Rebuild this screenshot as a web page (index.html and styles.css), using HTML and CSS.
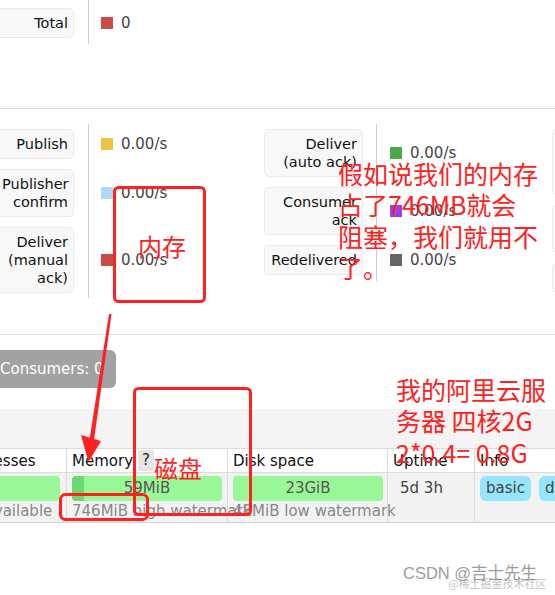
FILE: index.html
```html
<!DOCTYPE html>
<html>
<head>
<meta charset="utf-8">
<link rel="stylesheet" href="styles.css">
</head>
<body>
<div class="page">
  <div class="grp grp-total">
    <div class="lbl r1">Total</div>
    <div class="vline span1"></div>
    <div class="val r1"><span class="sq c-red"></span>0</div>
  </div>

  <hr class="rule rule-top">

  <div class="stats">
    <div class="grp g-left">
      <div class="lbl r1">Publish</div>
      <div class="val r1"><span class="sq c-yellow"></span>0.00/s</div>
      <div class="lbl r2">Publisher<br>confirm</div>
      <div class="val r2"><span class="sq c-blue"></span>0.00/s</div>
      <div class="lbl r3">Deliver<br>(manual<br>ack)</div>
      <div class="val r3"><span class="sq c-red"></span>0.00/s</div>
      <div class="vline span3"></div>
    </div>
    <div class="grp g-right">
      <div class="lbl r1">Deliver<br>(auto ack)</div>
      <div class="val r1"><span class="sq c-green"></span>0.00/s</div>
      <div class="lbl r2">Consumer<br>ack</div>
      <div class="val r2"><span class="sq c-purple"></span>0.00/s</div>
      <div class="lbl r3">Redelivered</div>
      <div class="val r3"><span class="sq c-grey"></span>0.00/s</div>
      <div class="vline span3"></div>
    </div>
    <div class="grp g-right">
      <div class="lbl r1">Get<br>(manual<br>ack)</div>
      <div class="val r1"><span class="sq c-yellow"></span>0.00/s</div>
      <div class="lbl r2">Get (auto<br>ack)</div>
      <div class="val r2"><span class="sq c-blue"></span>0.00/s</div>
      <div class="lbl r3">Get (empty)</div>
      <div class="val r3"><span class="sq c-red"></span>0.00/s</div>
      <div class="vline span3"></div>
    </div>
  </div>

  <hr class="rule rule-mid">

  <div class="consumers">Consumers: 0</div>

  <div class="band"></div>

  <div class="nodes">
    <div class="th k1">Erlang processes</div>
    <div class="th k2">Memory <span class="help">?</span></div>
    <div class="th k3">Disk space</div>
    <div class="th k4">Uptime</div>
    <div class="th k5">Info</div>

    <div class="row-bg"></div>
    <div class="td k1 first">
      <div class="bar"></div>
      <div class="sub sub-first">1048576 available</div>
    </div>
    <div class="td k2">
      <div class="bar"><span class="fill" style="width:12px"></span><span class="bar-txt">59MiB</span></div>
      <div class="sub">746MiB high watermark</div>
    </div>
    <div class="td k3">
      <div class="bar"><span class="bar-txt">23GiB</span></div>
      <div class="sub">48MiB low watermark</div>
    </div>
    <div class="td k4 uptime">5d 3h</div>
    <div class="td k5 info"><span class="tag">basic</span><span class="tag">disc</span><span class="tag">2</span></div>
  </div>

  <svg class="marks" width="555" height="595" viewBox="0 0 555 595">
    <rect x="114.5" y="187.5" width="90" height="114" rx="4" fill="none" stroke="#ff2020" stroke-width="3"/>
    <rect x="134.5" y="388.5" width="116" height="126" rx="4" fill="none" stroke="#ff2020" stroke-width="3"/>
    <rect x="60.5" y="494.5" width="87" height="25" rx="5" fill="none" stroke="#ff2020" stroke-width="3"/>
    <polygon points="109,314 111.5,314 94,440 89.5,440" fill="#ff2020"/>
    <polygon points="81,435 101,441 88.5,462" fill="#ff2020"/>
  </svg>

  <div class="note note-mem">内存</div>
  <div class="note note-disk">磁盘</div>
  <div class="note note-block note-a">假如说我们的内存<br>占了746MB就会<br>阻塞，我们就用不<br>了。</div>
  <div class="note note-block note-b">我的阿里云服<br>务器 四核2G<br>2*0.4= 0.8G</div>

  <div class="wm">CSDN @吉士先生</div>
  <div class="wm-sub">@稀土掘金技术社区</div>
</div>
</body>
</html>
```

FILE: styles.css
```css
* { box-sizing: border-box; }
html, body { margin: 0; padding: 0; background: #fff; }
body { font-family: "DejaVu Sans", "Noto Sans CJK SC", sans-serif; }

.page {
  position: relative;
  width: 555px;
  height: 595px;
  overflow: hidden;
  background: #fff;
}

/* ---------- stat groups ---------- */
.grp {
  display: grid;
  row-gap: 10px;
  flex: none;
}
.grp-total {
  margin-left: -5px;
  grid-template-columns: 79px 14px 1px 12px 163px;
  padding: 8px 0 6px;
}
.g-left {
  grid-template-columns: 79px 14px 1px 12px 163px;
  padding: 5px 0;
}
.g-right {
  grid-template-columns: 99px 13px 1px 13px 162px;
  padding: 5px 0 6px;
}
.stats {
  display: flex;
  align-items: flex-start;
  height: 174px;
  margin-left: -5px;
  margin-top: 15px;
}

.lbl {
  grid-column: 1;
  background: #f8f8f8;
  border: 1px solid #ebebeb;
  border-radius: 5px;
  padding: 5px 5px 5px 6px;
  text-align: right;
  font-size: 14.5px;
  line-height: 18px;
  color: #111;
  white-space: nowrap;
}
.val {
  grid-column: 5;
  display: flex;
  align-items: center;
  gap: 8px;
  font-size: 15px;
  color: #444;
}
.r1 { grid-row: 1; }
.r2 { grid-row: 2; }
.r3 { grid-row: 3; }

.vline {
  grid-column: 3;
  background: #cfcfcf;
  width: 1px;
}
.span1 { grid-row: 1 / span 1; margin: -8px 0 -6px; }
.span3 { grid-row: 1 / span 3; margin: -5px 0; }
.g-right .span3 { margin: -5px 0 -6px; }

.sq { width: 12px; height: 12px; flex: none; }
.c-red { background: #cb4b4b; }
.c-yellow { background: #edc240; }
.c-blue { background: #afd8f8; }
.c-green { background: #4da74d; }
.c-purple { background: #9440ed; }
.c-grey { background: #666; }

.rule {
  border: 0;
  height: 1px;
  background: #e0e0e0;
  margin: 0;
}
.rule-top { margin-top: 64px; }
.rule-mid { margin-top: 36px; }

/* ---------- consumers pill ---------- */
.consumers {
  width: fit-content;
  margin-top: 15px;
  margin-left: -10px;
  padding: 0 12px 0 10px;
  height: 38px;
  line-height: 38px;
  background: #a2a2a2;
  color: #fff;
  border-radius: 6px;
  font-size: 15px;
  white-space: nowrap;
}

.band {
  margin-top: 21px;
  height: 39px;
  background: #f4f4f4;
}

/* ---------- nodes table ---------- */
.nodes {
  display: grid;
  grid-template-columns: 163px 161px 160px 87px 200px;
  grid-template-rows: 25px 50px;
  margin-left: -97px;
  font-size: 15px;
}
.k1 { grid-column: 1; }
.k2 { grid-column: 2; }
.k3 { grid-column: 3; }
.k4 { grid-column: 4; }
.k5 { grid-column: 5; }

.th {
  grid-row: 1;
  border-top: 1px solid #dcdcdc;
  border-bottom: 1px solid #dcdcdc;
  border-left: 1px solid #dcdcdc;
  padding-left: 5px;
  display: flex;
  align-items: center;
  color: #111;
  background: #fff;
  white-space: nowrap;
}
.th.k1 { border-left: 0; }
.help {
  display: inline-block;
  margin-left: 5px;
  height: 21px;
  line-height: 21px;
  padding: 0 4px;
  background: #e6e6e6;
  color: #222;
}
.row-bg {
  grid-row: 2;
  grid-column: 1 / -1;
  background: #f2f2f2;
  border-bottom: 1px solid #d4d4d4;
}
.td {
  grid-row: 2;
  border-left: 1px solid #dcdcdc;
  padding: 3px 0 0 5px;
  white-space: nowrap;
  min-width: 0;
}
.td.first { border-left: 0; padding-left: 7px; }
.sub-first { padding-left: 3px; }
.bar {
  display: grid;
  width: 150px;
  height: 25px;
  border-radius: 4px;
  background: #98f898;
  overflow: hidden;
}
.fill {
  grid-area: 1 / 1;
  justify-self: start;
  height: 25px;
  background: #6dd86d;
}
.bar-txt {
  grid-area: 1 / 1;
  text-align: center;
  line-height: 25px;
  color: #555;
}
.sub {
  line-height: 20px;
  color: #888;
}
.uptime {
  padding-left: 12px;
  line-height: 25px;
  color: #444;
}
.info {
  display: flex;
  align-items: flex-start;
  gap: 8px;
}
.tag {
  height: 25px;
  line-height: 25px;
  padding: 0 6px;
  border-radius: 6px;
  background: #96e5fb;
  color: #444;
}

/* ---------- annotations ---------- */
.marks {
  position: absolute;
  left: 0;
  top: 0;
}
.note {
  position: absolute;
  font-family: "Noto Sans CJK SC", sans-serif;
  color: #ff2020;
  font-size: 24px;
  line-height: 30px;
  white-space: nowrap;
}
.note-mem { left: 138px; top: 231px; }
.note-disk { left: 154px; top: 453px; }
.note-block {
  font-size: 25px;
  line-height: 31.4px;
}
.note-a { left: 338px; top: 158px; }
.note-b { left: 396px; top: 374px; }

.wm {
  position: absolute;
  left: 403px;
  top: 562px;
  font-family: "Liberation Sans", "Noto Sans CJK SC", sans-serif;
  font-size: 16.5px;
  line-height: 22px;
  color: #9c9c9c;
  white-space: nowrap;
}
.wm-sub {
  position: absolute;
  left: 448px;
  top: 576px;
  font-family: "Noto Sans CJK SC", sans-serif;
  font-size: 11px;
  line-height: 14px;
  color: rgba(140, 140, 140, 0.55);
  white-space: nowrap;
}
```
